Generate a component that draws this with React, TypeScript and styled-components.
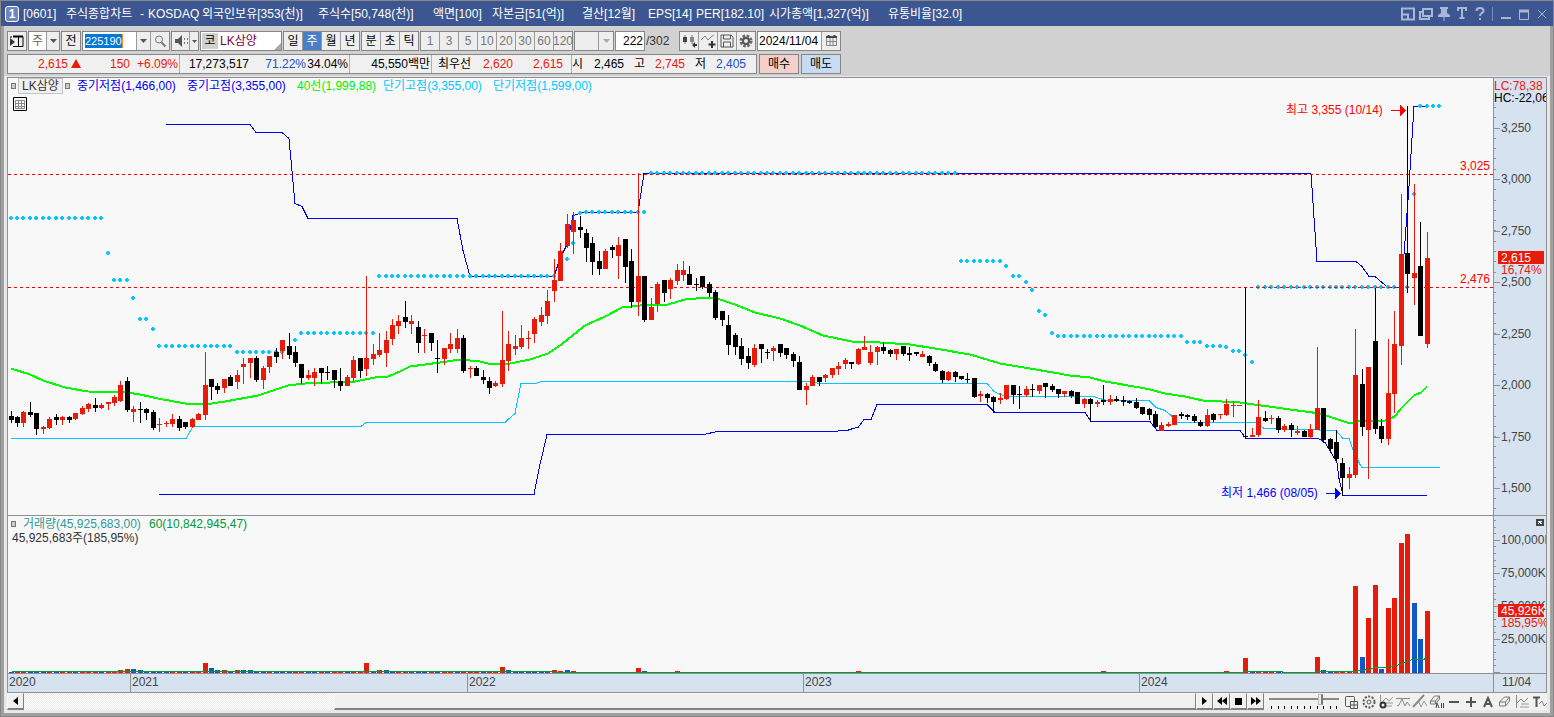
import React from "react";
import styled, { createGlobalStyle } from "styled-components";

const FONT = '"Liberation Sans", "Noto Sans CJK KR", sans-serif';
const RED = "#e81a0a";
const BLUE = "#1a50c8";

const GlobalStyle = createGlobalStyle`
  * { box-sizing: border-box; }
  html, body { margin: 0; padding: 0; }
  body, button, input, select { font-family: ${FONT}; font-size: 12px; line-height: 14px; color: #000; }
  button, input, select { margin: 0; padding: 0; border: 0; border-radius: 0; }
`;

/* ---------- data ---------- */

// [rising, high, body top, body bottom, low] in plot units
type Candle = [number, number, number, number, number];
const CANDLES: Candle[] = [
  [0,411,416,420,423],[0,416,417,423,427],[1,411,412,423,427],[0,402,412,415,417],[0,413,413,429,435],
  [1,426,427,429,434],[1,417,419,428,429],[0,414,417,420,425],[1,416,417,420,425],[0,416,417,420,423],
  [1,413,413,419,420],[1,406,408,414,415],[1,403,404,409,412],[0,398,405,408,412],[1,403,405,408,409],
  [1,402,402,404,410],[1,395,397,403,406],[1,381,385,401,402],[0,377,381,410,412],[1,406,409,412,422],
  [0,402,409,410,423],[0,408,409,413,420],[0,410,412,428,430],[1,418,424,425,432],[1,421,423,424,427],
  [1,414,419,424,427],[0,416,419,428,431],[0,422,422,427,429],[1,418,419,427,428],[1,413,414,420,420],
  [1,352,385,415,420],[0,379,379,387,400],[0,383,386,390,394],[1,379,379,388,393],[0,375,377,386,386],
  [1,370,375,382,389],[1,358,364,367,384],[1,358,358,363,378],[0,356,358,380,382],[1,366,368,380,389],
  [1,356,356,367,373],[0,348,352,357,363],[1,340,340,351,359],[0,333,346,355,359],[0,346,352,363,367],
  [0,364,364,378,384],[1,370,375,378,380],[1,368,372,378,386],[0,368,368,373,384],[0,366,372,373,380],
  [0,370,370,380,388],[0,368,381,386,391],[1,375,377,386,386],[1,356,360,378,382],[0,358,358,371,378],
  [1,276,358,369,376],[1,344,354,359,365],[1,333,350,355,357],[1,331,340,353,367],[1,319,325,339,345],
  [1,315,321,326,334],[0,301,317,322,328],[1,315,321,324,334],[0,321,327,343,353],[1,329,335,336,353],
  [0,333,333,343,351],[0,340,358,359,373],[1,348,348,359,365],[1,333,344,349,353],[1,329,338,349,353],
  [0,335,338,371,373],[1,366,368,369,378],[0,366,368,376,376],[0,370,377,380,384],[0,377,381,388,394],
  [1,381,383,386,387],[1,311,360,384,387],[1,331,344,361,371],[1,335,346,349,355],[1,325,338,347,349],
  [1,331,338,339,349],[1,317,319,334,343],[1,307,315,322,326],[1,290,301,316,324],[1,259,280,291,302],
  [1,243,251,281,281],[1,214,224,246,248],[1,212,220,232,254],[0,216,227,230,238],[0,229,233,248,262],
  [0,237,243,262,275],[0,251,261,269,275],[1,249,251,269,269],[0,245,247,250,258],[1,237,245,256,279],
  [0,239,239,267,283],[0,249,261,302,308],[1,173,276,302,316],[0,276,276,320,322],[1,298,307,320,320],
  [1,282,284,304,312],[0,280,280,293,302],[1,278,280,289,299],[1,264,270,281,285],[1,261,270,275,281],
  [0,266,274,285,285],[0,278,284,285,291],[0,276,276,287,289],[0,282,284,293,297],[0,290,292,318,320],
  [0,311,311,320,326],[0,315,325,345,355],[0,333,335,347,355],[0,338,346,359,365],[0,348,356,363,369],
  [1,344,348,365,367],[0,344,344,349,363],[0,349,352,353,359],[1,346,348,351,361],[0,344,344,353,357],
  [0,348,348,355,359],[0,352,354,361,367],[0,356,362,390,390],[1,383,386,390,405],[1,375,377,386,386],
  [0,377,377,382,386],[1,374,375,378,382],[1,368,368,375,378],[1,362,366,369,375],[1,358,360,364,369],
  [0,362,362,364,369],[1,348,349,364,365],[1,336,347,350,350],[1,345,352,363,365],[1,346,347,352,365],
  [0,342,347,351,354],[0,349,350,354,357],[1,349,349,354,360],[0,346,346,354,356],[0,347,353,355,361],
  [0,352,352,354,356],[1,351,354,357,357],[0,355,356,363,366],[0,362,364,371,372],[0,370,371,380,383],
  [1,371,372,380,381],[0,371,372,377,382],[0,376,376,379,380],[0,373,379,380,383],[0,378,378,397,398],
  [1,391,394,396,402],[0,393,394,398,403],[0,396,397,402,413],[1,393,398,400,404],[1,385,385,399,400],
  [0,385,385,395,404],[0,386,394,395,409],[1,386,389,395,397],[0,384,389,390,397],[1,385,385,391,394],
  [0,383,383,387,398],[0,384,386,390,392],[0,389,389,394,398],[1,391,391,394,397],[0,390,391,396,398],
  [0,392,392,404,404],[1,398,399,404,408],[0,398,399,404,422],[1,400,402,404,407],[0,385,400,402,405],
  [1,395,399,402,405],[0,396,399,401,402],[0,396,400,402,406],[0,400,401,403,404],[0,398,402,408,409],
  [0,407,407,414,415],[0,408,409,415,420],[0,411,414,427,428],[1,422,425,431,431],[1,422,424,426,427],
  [1,415,415,425,425],[0,412,414,416,419],[0,414,415,417,420],[0,414,416,421,423],[0,420,422,426,427],
  [1,409,415,426,427],[0,413,414,420,422],[1,414,414,415,419],[1,399,404,415,416],[1,401,405,406,417],
  [1,405,405,406,406],[0,287,436,437,439],[1,428,435,437,437],[1,400,417,435,437],[0,411,418,421,422],
  [1,415,418,419,424],[0,416,418,430,433],[1,424,426,430,432],[0,423,425,430,437],[1,426,431,433,435],
  [0,430,431,437,437],[1,424,429,437,439],[1,347,408,430,430],[0,408,408,440,443],[0,438,439,449,451],
  [0,430,442,459,461],[0,458,463,478,496],[1,467,474,478,489],[1,329,375,475,478],[0,369,384,427,436],
  [1,367,367,430,479],[0,288,341,429,434],[0,419,426,439,443],[1,339,393,439,445],[1,311,344,394,413],
  [1,194,254,346,365],[0,106,253,274,293],[1,184,273,278,305],[0,222,266,336,336],[1,232,258,344,348],
];

const barX = (i: number) => Math.floor(11.03 + i * 6.4658);

const MID_HIGH = "166,124 250,124 256,132 282,132 289,138 295,203 302,206 308,218 457,218 463,250 470,276 554,276 560,258 567,244 573,215 583,212 638,212 644,173 1311,173 1317,261 1356,261 1362,266 1369,276 1375,276 1388,287 1400,287 1404,254 1409,186 1414,106 1427,106";
const MID_LOW = "159,494 534,494 540,464 547,434 704,434 717,431 829,431 847,430 853,428 858,427 864,419 871,419 877,404 987,404 995,412 1085,412 1091,421 1150,421 1157,430 1240,430 1246,438 1318,438 1325,442 1337,462 1339,478 1343,495 1427,495";
const SHORT_LOW = "11,438 186,438 193,426 361,426 366,422 505,422 508,419 515,413 521,383 536,383 541,381 812,381 819,383 987,383 994,391 1005,396 1093,396 1100,398 1106,400 1149,400 1156,407 1165,410 1171,415 1175,422 1257,422 1264,428 1336,430 1343,438 1349,438 1354,452 1360,464 1362,467 1440,467";
const MA40 = "11,368 30,374 43,380 65,387 88,391 127,392 140,394 158,398 185,403 205,404 225,401 258,395 288,385 305,383 355,381 380,376 388,376 400,371 410,366 440,362 460,359 480,361 492,364 510,363 530,359 548,353 560,345 585,325 605,316 622,307 640,305 668,304 685,299 707,297 720,299 735,304 755,312 780,318 800,325 823,335 852,341 880,342 910,344 935,348 970,354 1000,363 1030,368 1070,375 1090,377 1105,381 1140,387 1150,389 1165,393 1185,396 1203,400 1240,402 1290,409 1320,413 1335,418 1350,423 1362,420 1385,420 1395,416 1401,408 1414,395 1421,392 1427,386";
const VOLUME_MA = "11,671 60,671 1020,672 1243,672 1244,671 1282,671 1283,672 1314,672 1315,671 1353,671 1362,670 1368,669 1374,667 1385,667 1390,666 1400,664 1408,660 1414,659 1421,659 1427,658";

// [first bar, last bar, level]
const DOT_RUNS: [number, number, number][] = [
  [0,14,218],[15,15,253],[16,18,280],[19,19,298],[20,21,319],[22,22,329],[23,34,346],[35,43,352],
  [44,44,340],[45,56,333],[57,84,276],[86,86,259],[87,87,243],[88,88,213],[89,98,212],[99,146,173],
  [147,153,261],[154,154,266],[155,156,276],[157,157,282],[158,158,290],[159,159,311],[160,160,315],
  [161,161,333],[162,181,336],[182,184,342],[185,187,346],[188,188,347],[189,190,351],[191,191,355],
  [192,192,362],[193,216,287],[217,217,194],[218,221,106],
];

const VOLUMES: Record<number, number> = {
  17: 3, 18: 4, 19: 4, 20: 3, 30: 10, 31: 5, 32: 3, 33: 3, 34: 2, 35: 3, 36: 3, 37: 3, 55: 10, 57: 3, 58: 3, 59: 2,
  76: 6, 77: 3, 78: 2, 84: 3, 85: 2, 86: 3, 87: 2, 97: 5, 98: 2, 103: 2, 131: 2, 169: 2, 188: 2, 191: 15, 192: 2, 193: 2, 194: 2, 195: 2,
  196: 2, 202: 16, 203: 3, 204: 2, 205: 2, 206: 2, 207: 2, 208: 87, 209: 16, 210: 55, 211: 88, 212: 4, 213: 65,
  214: 75, 215: 130, 216: 139, 217: 70, 218: 34, 219: 62,
};
const VOLUME_FALLS = "BRRBBBRBRRBRRRBRRRRBBBBBBRRBRRRBBRBRBBBBRBBBRRBBRBRRBRRRBRB";
const isFalling = (i: number) => {
  if (i >= 208) return [209, 212, 217, 218].includes(i);
  if ([76, 97, 169, 188, 191, 202].includes(i)) return false;
  if ([77, 98, 192, 203].includes(i)) return true;
  return VOLUME_FALLS[i % VOLUME_FALLS.length] === "B";
};

/* ---------- frame ---------- */

const Frame = styled.div`
  display: flex;
  flex-direction: column;
  min-height: 100vh;
  background: #e8e8e8;
  border: 1px solid #868686;
`;

const TitleBar = styled.header`
  display: flex;
  align-items: center;
  height: 25px;
  padding: 0 4px;
  background: #3b5691;
  color: #fff;
`;

const Logo = styled.span`
  width: 14px;
  height: 16px;
  border: 1px solid #fff;
  border-radius: 3px;
  background: #6f87bd;
  font-weight: bold;
  text-align: center;
`;

const TitleText = styled.h1`
  display: grid;
  grid-template-columns: 43px 74px 8px 54px 116px 115px 59px 90px 66px 48px 73px 119px 90px;
  margin: 0 auto 0 4px;
  font-size: 12px;
  font-weight: normal;
  white-space: nowrap;
`;

const TitleTools = styled.div`
  display: flex;
  align-items: center;
  gap: 4px;
`;

const TitleButton = styled.button`
  width: 14px;
  height: 16px;
  background: none;
  color: #a9b6d4;
`;

const TitleRule = styled.i`
  width: 1px;
  height: 14px;
  margin: 0 2px 0 1px;
  background: #7b8db8;
`;

const Body = styled.div`
  display: flex;
  flex: 1;
  flex-direction: column;
  border: solid #a0a0a0;
  border-width: 0 3px 3px;
`;

const Bars = styled.div`
  display: flex;
  flex-direction: column;
  gap: 3px;
  height: 50px;
  padding: 5px 3px 0;
  background: #d1d1d1;
`;

const Row = styled.div<{ $gap: number }>`
  display: flex;
  height: 20px;
  gap: ${(p) => p.$gap}px;
`;

const Group = styled.div`
  display: flex;
  height: 20px;
  border: 1px solid #868686;
  background: #fff;
`;

const Tool = styled.button<{ $w?: number; $on?: boolean; $dim?: boolean; $first?: boolean }>`
  display: flex;
  align-items: center;
  justify-content: center;
  width: ${(p) => p.$w ?? 19}px;
  border-left: ${(p) => (p.$first ? 0 : 1)}px solid #9a9a9a;
  background: ${(p) => (p.$on ? "#4a7fc6" : "#eeeeee")};
  color: ${(p) => (p.$on ? "#fff" : p.$dim ? "#777" : "#000")};
`;

const Field = styled.input<{ $w: number; $right?: boolean }>`
  width: ${(p) => p.$w}px;
  padding: 0 1px;
  text-align: ${(p) => (p.$right ? "right" : "left")};
  background: #fff;
  outline: none;
`;

const CodeWrap = styled.label`
  display: flex;
  align-items: center;
  width: 53px;
  padding-left: 2px;
`;

const CodeInput = styled.input`
  width: 38px;
  height: 14px;
  border-right: 1px solid #ff8a28;
  background: #0078d7;
  color: #fff;
  font-size: 11px;
  outline: none;
`;

const Pick = styled.select<{ $w: number }>`
  width: ${(p) => p.$w}px;
  padding-left: 3px;
  appearance: none;
  background: #fff;
  color: #666;
  outline: none;
`;

const NameBox = styled.div`
  display: flex;
  align-items: center;
  width: 80px;
  padding-left: 1px;
  color: #7a0040;
  b {
    width: 16px;
    margin-right: 2px;
    background: #d0d0d0;
    color: #000;
    font-weight: normal;
    line-height: 16px;
    text-align: center;
  }
  svg { margin: auto 0 0 auto; }
`;

const Total = styled.span`
  width: 32px;
  color: #333;
  line-height: 20px;
`;

const Quote = styled.div`
  display: flex;
  width: 750px;
  border: 1px solid #868686;
  background: #f0f0f0;
  line-height: 18px;
`;

const QuoteCell = styled.span<{ $w: number; $c?: string; $rule?: boolean }>`
  width: ${(p) => p.$w}px;
  padding-right: 1px;
  border-right: ${(p) => (p.$rule ? 1 : 0)}px solid #b0b0b0;
  color: ${(p) => p.$c ?? "#000"};
  text-align: right;
  white-space: nowrap;
`;

const Trade = styled.button<{ $c: string }>`
  width: 40px;
  border: 1px solid #868686;
  background: ${(p) => p.$c};
`;

/* ---------- chart ---------- */

const Chart = styled.main`
  display: grid;
  flex: 1;
  grid-template-columns: minmax(0, 1fr) 53px;
  grid-template-rows: 438px minmax(158px, 1fr) 18px;
  margin: 1px 3px 0;
  border: 1px solid #909090;
  background: #f8f8f8;
`;

const Pane = styled.section`
  display: grid;
  grid-template-columns: minmax(0, 1fr);
  border-bottom: 1px solid #909090;
  overflow: hidden;
  > * { grid-area: 1 / 1; }
`;

const Scale = styled.aside`
  display: grid;
  border-bottom: 1px solid #909090;
  border-left: 1px solid #909090;
  background: #d6e2f0;
  overflow: hidden;
`;

const Drawing = styled.svg`
  display: block;
  width: 100%;
  height: 100%;
  font-family: ${FONT};
  font-size: 12px;
  shape-rendering: crispEdges;
`;

const Legend = styled.div`
  display: flex;
  align-items: center;
  align-self: start;
  height: 16px;
  padding-left: 3px;
  white-space: nowrap;
`;

const Marker = styled.i`
  width: 5px;
  height: 6px;
  border: 1px solid #777;
  background: #ccc;
`;

const LegendName = styled.span`
  width: 45px;
  margin: 0 2px;
  border: 1px solid #c4c4c4;
  background: #f0f0f0;
  color: #333;
  text-align: center;
`;

const LegendItems = styled.div`
  display: flex;
  margin-left: 7px;
`;

const LegendItem = styled.span<{ $c: string; $w: number }>`
  width: ${(p) => p.$w}px;
  color: ${(p) => p.$c};
`;

const PaneNotes = styled.div`
  align-self: start;
  color: #333;
  p { margin: 0; padding-left: 4px; line-height: 12px; }
`;

const TableButton = styled.button`
  display: block;
  width: 14px;
  height: 14px;
  margin: 3px 0 0 5px;
  background: none;
`;

const Years = styled.div`
  display: flex;
  background: #d6e2f0;
  color: #444;
  line-height: 17px;
`;

const Year = styled.span<{ $w?: number; $first?: boolean }>`
  ${(p) => (p.$w ? `width: ${p.$w}px;` : "flex: 1;")}
  padding-left: 1px;
  border-left: ${(p) => (p.$first ? 0 : 1)}px solid #909090;
`;

const Today = styled.div`
  padding-left: 8px;
  border-left: 1px solid #909090;
  background: #d6e2f0;
  color: #444;
  line-height: 17px;
`;

const Footer = styled.footer`
  display: flex;
  height: 17px;
  margin: 0 3px 3px;
  background: #f1f1f1;
`;

const Track = styled.div`
  display: flex;
  flex: 1;
  padding-left: 310px;
  background: repeating-conic-gradient(#fff 0 25%, #ececec 0 50%) 0 0 / 2px 2px;
`;

const Raised = styled.button<{ $grow?: boolean }>`
  display: flex;
  align-items: center;
  justify-content: center;
  ${(p) => (p.$grow ? "flex: 1;" : "width: 17px;")}
  border: 1px solid #f8f8f8;
  border-right-color: #808080;
  border-bottom: 2px solid #808080;
  background: #f0f0f0;
`;

const Zoom = styled.label`
  display: block;
  width: 70px;
  margin: 0 5px;
  svg { display: block; }
`;

const ZoomRange = styled.input`
  display: block;
  width: 70px;
  height: 13px;
  appearance: none;
  background: linear-gradient(#888, #888) 0 5px / 100% 2px no-repeat;
  &::-webkit-slider-thumb {
    appearance: none;
    width: 5px;
    height: 11px;
    border: 1px solid #bbb;
    border-right: 2px solid #777;
    background: #eee;
  }
`;

const FooterTools = styled.div`
  display: flex;
  gap: 1px;
`;

const FooterButton = styled.button`
  width: 16px;
  height: 17px;
  background: none;
  color: #555;
  svg { display: block; }
`;

/* ---------- icons ---------- */

const Down = ({ c = "#555" }: { c?: string }) => (
  <svg width="7" height="4" viewBox="0 0 7 4"><path d="M0 0h7L3.500 4z" fill={c} /></svg>
);

const RiseMark = () => (
  <svg width="10" height="9" viewBox="0 0 10 9"><path d="M5 0l5 9H0z" fill={RED} /></svg>
);

const Icon = ({ children, w = 16, h = 16 }: { children: React.ReactNode; w?: number; h?: number }) => (
  <svg width={w} height={h} viewBox={`0 0 ${w} ${h}`} fill="none" stroke="currentColor" shapeRendering="auto">{children}</svg>
);

const FOOT_ICONS: [string, React.ReactNode][] = [
  ["화면 분할", <><rect x="1.500" y="2.500" width="9" height="10" rx="1" /><path d="M6.500 7.500h7v7h-7zM10 7.500v7M6.500 11h7" fill="#f1f1f1" /></>],
  ["설정", <><circle cx="8" cy="8" r="5.500" strokeWidth="2" strokeDasharray="2 1.500" /><circle cx="8" cy="8" r="2" /></>],
  ["지표 추가", <><path d="M2.500 1v9M4 8l4-4 3 3 4-4M8 9h7M8 12h6" stroke="#999" /><circle cx="5" cy="11" r="2.500" strokeWidth="2" stroke="#333" /></>],
  ["추세선", <><path d="M1 4.500h14" stroke="#888" /><path d="M2 12l2-1 3-6 3 7 2-4 3 4" stroke="#888" /></>],
  ["분석선", <><path d="M1 13L12 1" strokeWidth="2" stroke="#888" /><path d="M2 11l5-3 2 5 3-6 3 5" stroke="#999" /></>],
  ["모두 지우기", <><path d="M1.500 7l4-5h5l-4 5zM1.500 7v3h5V7M6.500 10l4-5V2" stroke="#777" /><path d="M7 14l1-5 2 5M12.500 9v5M14.500 9v5" stroke="#444" /></>],
  ["축소", <path d="M3 8h10" strokeWidth="2" />],
  ["확대", <path d="M3 8h10M8 3v10" strokeWidth="2" />],
  ["글자", <path d="M4 13L8 4l4 9M5.500 10h5" strokeWidth="2" />],
  ["지우개", <path d="M2.500 8l5-5h5l-4 5zM2.500 8v4h6V8M8.500 12l4-5V3" stroke="#777" />],
  ["지표", <><path d="M2.500 1v13M3 9l4-4 3 3 4-4" stroke="#888" /><path d="M7 10h8M6 13h9" stroke="#999" /></>],
  ["문자 표시", <><path d="M2 3.500h7M5.500 3v10" strokeWidth="2" /><path d="M8 10l3-3 2 5 3-3" stroke="#888" /></>],
];

/* ---------- chart parts ---------- */

const PricePlot = () => (
  <Drawing role="img" aria-label="LK삼양 주봉 차트">
    <g transform="translate(-8 -78)">
      <g transform="translate(0 .5)" fill="none">
        <polyline points={SHORT_LOW} stroke="#00c8ff" />
        <polyline points={MID_HIGH} stroke="#0000e8" />
        <polyline points={MID_LOW} stroke="#0000e8" />
        <polyline points={MA40} stroke="#00f800" strokeWidth="2" />
      </g>
      {DOT_RUNS.flatMap(([from, to, y]) =>
        Array.from({ length: to - from + 1 }, (_, k) => {
          const x = barX(from + k);
          return <path key={`${from}-${k}`} d={`M${x - 1} ${y - 2}h2v1h1v2h-1v1h-2v-1h-1v-2h1z`} fill="#00c8ff" />;
        })
      )}
    </g>
    <g stroke="#f00000" strokeDasharray="3 3">
      <line x1="0" x2="100%" y1="96.500" y2="96.500" />
      <line x1="0" x2="100%" y1="209.500" y2="209.500" />
    </g>
    <g transform="translate(-8 -78)">
      {CANDLES.map(([up, hi, top, bottom, lo], i) => {
        const x = barX(i);
        return (
          <path key={i} fill={up ? RED : "#000"} d={`M${x} ${hi}h1V${lo}h-1zM${x - 2} ${top}h5V${bottom}h-5z`} />
        );
      })}
      <text x="1286" y="114" fill="#f00">최고 3,355 (10/14)</text>
      <path d="M1391 110h9v-5l6 5-6 6v-5h-9z" fill="#f00" />
      <text x="1221" y="497" fill="#00f">최저 1,466 (08/05)</text>
      <path d="M1326 493h9v-5l6 5-6 6v-5h-9z" fill="#00f" />
    </g>
    <g fill="#f00" textAnchor="end">
      <text x="100%" dx="-3" y="92">3,025</text>
      <text x="100%" dx="-3" y="205">2,476</text>
    </g>
  </Drawing>
);

const VolumePlot = () => (
  <Drawing role="img" aria-label="거래량">
    <g transform="translate(-8 -516)">
      {CANDLES.map((_, i) => {
        const h = VOLUMES[i] ?? 1;
        return <rect key={i} x={barX(i) - 2} y={673 - h} width="5" height={h} fill={isFalling(i) ? "#1058c8" : RED} />;
      })}
      <polyline points={VOLUME_MA} transform="translate(.5 .5)" fill="none" stroke="#009838" />
    </g>
  </Drawing>
);

const PRICES = ["3,250", "3,000", "2,750", "2,500", "2,250", "2,000", "1,750", "1,500"];
const priceY = (step: number) => Math.round(50 + (step * 360) / 7);

const PriceScale = () => (
  <Drawing>
    {Array.from({ length: 40 }, (_, k) => (
      <rect key={k} x="0" y={Math.round(29 + k * 10.286)} width="2" height="1" fill="#909090" />
    ))}
    {PRICES.map((p, i) => (
      <g key={p}>
        <rect x="0" y={priceY(i)} width="6" height="1" fill="#909090" />
        <text x="7" y={priceY(i) + 4} fill="#444">{p}</text>
      </g>
    ))}
    <text x="0" y="12" fill={RED}>LC:78,38</text>
    <text x="0" y="24">HC:-22,06</text>
    <rect x="4" y="173" width="46" height="13" fill={RED} />
    <text x="7" y="184" fill="#fff">2,615</text>
    <text x="7" y="196" fill={RED}>16,74%</text>
  </Drawing>
);

const VolumeScale = () => (
  <Drawing>
    {Array.from({ length: 24 }, (_, k) => (
      <rect key={k} x="0" y={Math.round(4 + k * 6.6)} width="2" height="1" fill="#909090" />
    ))}
    {["100,000K", "75,000K", "50,000K", "25,000K", ""].map((v, i) => (
      <g key={v}>
        <rect x="0" y={24 + i * 33} width="6" height="1" fill="#909090" />
        {v && <text x="7" y={28 + i * 33} fill="#444">{v}</text>}
      </g>
    ))}
    <rect x="42" y="3" width="8" height="7" fill="#444" />
    <path d="M44 5l4 3M48 5l-4 3" stroke="#fff" />
    <rect x="4" y="88" width="46" height="13" fill={RED} />
    <text x="7" y="99" fill="#fff">45,926K</text>
    <text x="7" y="111" fill={RED}>185,95%</text>
  </Drawing>
);

/* ---------- page ---------- */

const TITLE = ["[0601]", "주식종합차트", "-", "KOSDAQ", "외국인보유[353(천)]", "주식수[50,748(천)]", "액면[100]", "자본금[51(억)]", "결산[12월]", "EPS[14]", "PER[182.10]", "시가총액[1,327(억)]", "유통비율[32.0]"];

const QUOTES: [React.ReactNode, number, string?, boolean?][] = [
  ["2,615", 61, RED], [<RiseMark />, 13, RED], ["150", 49, RED], ["+6.09%", 49, RED, true],
  ["17,273,517", 70], ["71.22%", 57, BLUE], ["34.04%", 43, undefined, true], ["45,550백만", 82, undefined, true],
  ["최우선", 40], ["2,620", 42, RED], ["2,615", 50, RED], ["", 8, undefined, true],
  ["시", 12], ["2,465", 41], ["고", 21], ["2,745", 40, RED], ["저", 21], ["2,405", 40, BLUE],
];

export default function App() {
  return (
    <Frame>
      <GlobalStyle />
      <TitleBar>
        <Logo>1</Logo>
        <TitleText>{TITLE.map((t) => <span key={t}>{t}</span>)}</TitleText>
        <TitleTools>
          <TitleButton aria-label="축소 창"><Icon w={14}><path d="M1 2.500h12v11H1zM1 8.500h6v5" strokeWidth="2" /></Icon></TitleButton>
          <TitleButton aria-label="새 창"><Icon w={14}><path d="M4 3h9v7H4zM4 6H1v7h9v-3" strokeWidth="2" /></Icon></TitleButton>
          <TitleButton aria-label="고정"><Icon w={14}><path d="M3 1h8v2h-1v4l3 2v2H1V9l3-2V3H3zM6.500 11h1v4h-1z" fill="currentColor" stroke="none" /></Icon></TitleButton>
          <TitleButton aria-label="글꼴"><Icon w={14}><path d="M3 5V2h8v3M7 2v10M4.500 12h5" strokeWidth="2" /></Icon></TitleButton>
          <TitleButton aria-label="도움말"><Icon w={14}><path d="M3.500 5c0-4 7-4 7 0 0 2-3.500 2-3.500 5M7 12v2" strokeWidth="2" /></Icon></TitleButton>
          <TitleRule />
          <TitleButton aria-label="최소화"><Icon w={14}><path d="M2 12h10" strokeWidth="2" /></Icon></TitleButton>
          <TitleButton aria-label="최대화"><Icon w={14}><path d="M2.500 4.500h9v9h-9z" /><path d="M2 5h10" strokeWidth="3" /></Icon></TitleButton>
          <TitleButton aria-label="닫기"><Icon w={14}><path d="M3 4l8 8M11 4l-8 8" /></Icon></TitleButton>
        </TitleTools>
      </TitleBar>
      <Body>
        <Bars>
          <Row $gap={1}>
            <Group>
              <Tool $first $w={18} aria-label="패널"><Icon><path d="M4 3.500h10v10H4M9.500 4v9M2 3v2" /><path d="M4 3.500h10" strokeWidth="2" /><path d="M1 5l5 4-5 4z" fill="#333" stroke="none" /></Icon></Tool>
            </Group>
            <Group>
              <Pick $w={17} aria-label="종류" defaultValue="주"><option>주</option></Pick>
              <Tool $w={13} aria-label="종류 열기"><Down /></Tool>
            </Group>
            <Group><Tool $first $w={18}>전</Tool></Group>
            <Group>
              <CodeWrap><CodeInput aria-label="종목코드" defaultValue="225190" /></CodeWrap>
              <Tool $w={14} aria-label="종목 목록"><Down /></Tool>
              <Tool aria-label="검색"><Icon><circle cx="7" cy="6.500" r="3.500" stroke="#777" /><path d="M9.500 9.500l4 4" stroke="#777" strokeWidth="2" /></Icon></Tool>
            </Group>
            <Group>
              <Tool $first $w={17} aria-label="소리"><Icon><path d="M2 6h3l4-4v12l-4-4H2z" fill="#555" stroke="none" /><path d="M11.500 5v6M14.500 5v6" strokeDasharray="2 2" stroke="#777" /></Icon></Tool>
              <Tool $w={9} aria-label="소리 열기"><svg width="5" height="3" viewBox="0 0 5 3"><path d="M0 0h5L2.500 3z" fill="#555" /></svg></Tool>
            </Group>
            <Group>
              <NameBox><b>코</b>LK삼양<svg width="7" height="7" viewBox="0 0 7 7"><path d="M7 0v7H0z" fill="#aaa" /></svg></NameBox>
            </Group>
            <Group>
              <Tool $first $w={18}>일</Tool><Tool $on>주</Tool><Tool>월</Tool><Tool>년</Tool>
            </Group>
            <Group>
              <Tool $first $w={18}>분</Tool><Tool>초</Tool><Tool>틱</Tool>
            </Group>
            <Group>
              <Tool $first $dim $w={18}>1</Tool>
              {["3", "5", "10", "20", "30", "60"].map((n) => <Tool key={n} $dim>{n}</Tool>)}
              <Tool $dim>120</Tool>
            </Group>
            <Group>
              <Tool $first $w={23} aria-label="사용자 주기" />
              <Tool $w={15} aria-label="주기 열기"><Down c="#aaa" /></Tool>
            </Group>
            <Group><Field $w={28} $right aria-label="봉 수" defaultValue="222" /></Group>
            <Total>/302</Total>
            <Group>
              <Tool $first $w={18} aria-label="봉 유형"><Icon><path d="M4 2v9M11 2v9" stroke="#777" /><path d="M2 4h4v5H2z" fill="#444" stroke="none" /><path d="M9 4h4v5H9z" fill="#888" stroke="none" /><path d="M11 12l3-3v2h2v2h-2v2z" fill="#333" stroke="none" /></Icon></Tool>
              <Tool aria-label="지표 추가"><Icon><path d="M1 7l4-4 3 4 3-3 3-2" stroke="#888" /><path d="M12 8v7M8.500 11.500h7" strokeWidth="2" stroke="#333" /></Icon></Tool>
              <Tool aria-label="저장"><Icon><path d="M2 2h10l2 2v10H2zM4.500 2v4h7V2M4.500 14V9h7v5" stroke="#555" /></Icon></Tool>
              <Tool aria-label="설정"><Icon><circle cx="8" cy="8" r="5" stroke="#666" strokeWidth="3" strokeDasharray="2.500 1.430" /><circle cx="8" cy="8" r="3" stroke="#555" strokeWidth="2" /></Icon></Tool>
            </Group>
            <Group>
              <Field $w={63} aria-label="날짜" defaultValue="2024/11/04" />
              <Tool aria-label="달력"><Icon><path d="M3.500 4.500h10v8h-10zM4 8.500h9M7 5v8M10 5v8" stroke="#888" /><path d="M3 4h11M5.500 2v2M11.500 2v2" strokeWidth="2" stroke="#444" /></Icon></Tool>
            </Group>
          </Row>
          <Row $gap={2}>
            <Quote>
              {QUOTES.map(([text, w, c, rule], i) => (
                <QuoteCell key={i} $w={w} $c={c} $rule={rule}>{text}</QuoteCell>
              ))}
            </Quote>
            <Trade $c="#f4d0ca">매수</Trade>
            <Trade $c="#c6dcf2">매도</Trade>
          </Row>
        </Bars>
        <Chart>
          <Pane>
            <PricePlot />
            <PaneNotes>
              <Legend>
                <Marker />
                <LegendName>LK삼양</LegendName>
                <Marker />
                <LegendItems>
                  <LegendItem $c="#0000e8" $w={110}>중기저점(1,466,00)</LegendItem>
                  <LegendItem $c="#0000e8" $w={110}>중기고점(3,355,00)</LegendItem>
                  <LegendItem $c="#00f000" $w={86}>40선(1,999,88)</LegendItem>
                  <LegendItem $c="#00c8ff" $w={110}>단기고점(3,355,00)</LegendItem>
                  <LegendItem $c="#00c8ff" $w={110}>단기저점(1,599,00)</LegendItem>
                </LegendItems>
              </Legend>
              <TableButton aria-label="수치 보기">
                <Icon w={14} h={14}><path d="M.5.5h13v13H.5z" stroke="#000" /><path d="M2.500 3.500h9v8h-9zM5.500 3v9M8.500 3v9M3 6.500h9M3 9.500h9" stroke="#888" /></Icon>
              </TableButton>
            </PaneNotes>
          </Pane>
          <Scale><PriceScale /></Scale>
          <Pane>
            <VolumePlot />
            <PaneNotes>
              <Legend>
                <Marker />
                <LegendItems>
                  <LegendItem $c="#309898" $w={126}>거래량(45,925,683,00)</LegendItem>
                  <LegendItem $c="#009838" $w={110}>60(10,842,945,47)</LegendItem>
                </LegendItems>
              </Legend>
              <p>45,925,683주(185,95%)</p>
            </PaneNotes>
          </Pane>
          <Scale><VolumeScale /></Scale>
          <Years>
            <Year $first $w={122}>2020</Year>
            <Year $w={337}>2021</Year>
            <Year $w={336}>2022</Year>
            <Year $w={336}>2023</Year>
            <Year>2024</Year>
          </Years>
          <Today>11/04</Today>
        </Chart>
        <Footer>
          <Raised aria-label="왼쪽"><svg width="5" height="8" viewBox="0 0 5 8"><path d="M5 0v8L0 4z" /></svg></Raised>
          <Track><Raised $grow aria-label="스크롤" /></Track>
          <Raised aria-label="오른쪽"><svg width="5" height="8" viewBox="0 0 5 8"><path d="M0 0v8l5-4z" /></svg></Raised>
          <Raised aria-label="뒤로"><svg width="10" height="8" viewBox="0 0 10 8"><path d="M5 0v8L0 4zM10 0v8L5 4z" /></svg></Raised>
          <Raised aria-label="정지"><svg width="7" height="7" viewBox="0 0 7 7"><path d="M0 0h7v7H0z" /></svg></Raised>
          <Raised aria-label="앞으로"><svg width="10" height="8" viewBox="0 0 10 8"><path d="M0 0v8l5-4zM5 0v8l5-4z" /></svg></Raised>
          <Zoom>
            <ZoomRange type="range" aria-label="확대 비율" min={0} max={100} defaultValue={75} />
            <svg width="70" height="3" viewBox="0 0 70 3">
              {Array.from({ length: 11 }, (_, k) => <rect key={k} x={2 + Math.round(k * 6.5)} y="0" width="1" height="3" />)}
            </svg>
          </Zoom>
          <FooterTools>
            {FOOT_ICONS.map(([label, shape]) => (
              <FooterButton key={label} aria-label={label}><Icon>{shape}</Icon></FooterButton>
            ))}
          </FooterTools>
        </Footer>
      </Body>
    </Frame>
  );
}
